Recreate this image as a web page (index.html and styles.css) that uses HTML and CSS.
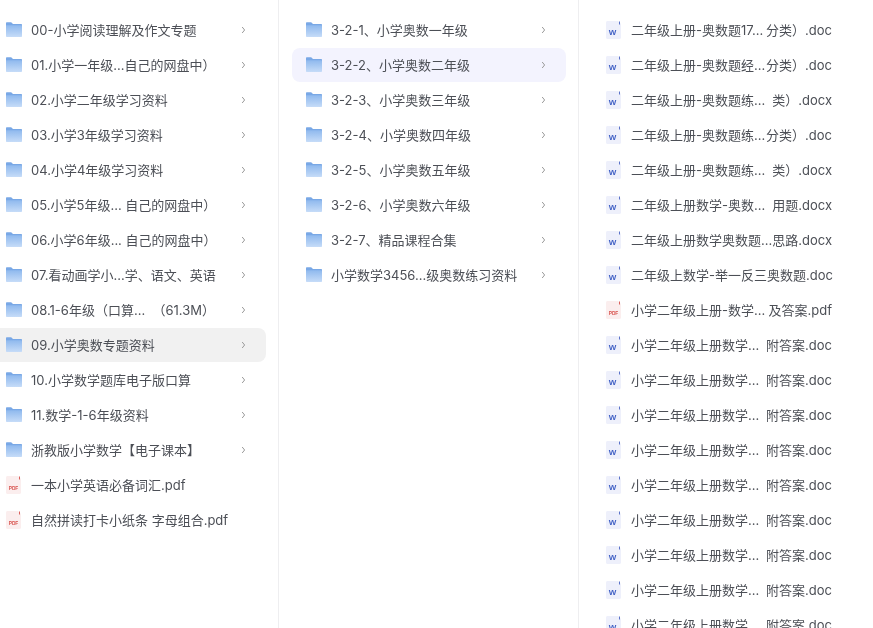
FILE: index.html
```html
<!DOCTYPE html>
<html lang="zh-CN">
<head>
<meta charset="utf-8">
<title>文件列表</title>
<link rel="stylesheet" href="styles.css">
</head>
<body>
<svg class="sprites" aria-hidden="true">
  <defs>
    <linearGradient id="fg" x1="0" y1="0" x2="0" y2="1">
      <stop offset="0" stop-color="#8fb9ee"/>
      <stop offset="1" stop-color="#c6dcf8"/>
    </linearGradient>
    <symbol id="folder" viewBox="0 0 16 16">
      <path d="M0 1.200C0 .6.400 .2 1 .2h4.200l1.800 1.800H15c.6 0 1 .4 1 1v2H0z" fill="#79a8e6"/>
      <path d="M0 3.200h15c.6 0 1 .4 1 1V14c0 .6-.4 1-1 1H1c-.6 0-1-.4-1-1z" fill="url(#fg)"/>
    </symbol>
    <symbol id="pdf" viewBox="0 0 16 18">
      <path d="M1.500 0H12l3 3v13.500c0 .8-.7 1.500-1.500 1.500h-12C.7 18 0 17.300 0 16.500v-15C0 .7.700 0 1.500 0z" fill="#fbeeee"/>
      <path d="M13.500 .5v3" stroke="#d9605c" stroke-width="1"/>
      <text x="7.500" y="13.500" class="ft pdf-t">PDF</text>
    </symbol>
    <symbol id="word" viewBox="0 0 16 18">
      <path d="M1.500 0H12l3 3v13.500c0 .8-.7 1.500-1.500 1.500h-12C.7 18 0 17.300 0 16.500v-15C0 .7.700 0 1.500 0z" fill="#eef0fb"/>
      <path d="M13.500 .5v3" stroke="#5a72c8" stroke-width="1"/>
      <text x="6.500" y="14" class="ft word-t">W</text>
    </symbol>
    <symbol id="chev" viewBox="0 0 5 8">
      <path d="M1.200 1 3.600 4 1.200 7" fill="none" stroke="#999" stroke-width="1"/>
    </symbol>
  </defs>
</svg>

<main class="columns">
  <section class="col">
    <div class="row"><svg class="ico"><use href="#folder"/></svg><span class="name">00-小学阅读理解及作文专题</span><svg class="chev"><use href="#chev"/></svg></div>
    <div class="row"><svg class="ico"><use href="#folder"/></svg><span class="name">01.小学一年级...自己的网盘中）</span><svg class="chev"><use href="#chev"/></svg></div>
    <div class="row"><svg class="ico"><use href="#folder"/></svg><span class="name">02.小学二年级学习资料</span><svg class="chev"><use href="#chev"/></svg></div>
    <div class="row"><svg class="ico"><use href="#folder"/></svg><span class="name">03.小学3年级学习资料</span><svg class="chev"><use href="#chev"/></svg></div>
    <div class="row"><svg class="ico"><use href="#folder"/></svg><span class="name">04.小学4年级学习资料</span><svg class="chev"><use href="#chev"/></svg></div>
    <div class="row"><svg class="ico"><use href="#folder"/></svg><span class="name">05.小学5年级... 自己的网盘中）</span><svg class="chev"><use href="#chev"/></svg></div>
    <div class="row"><svg class="ico"><use href="#folder"/></svg><span class="name">06.小学6年级... 自己的网盘中）</span><svg class="chev"><use href="#chev"/></svg></div>
    <div class="row"><svg class="ico"><use href="#folder"/></svg><span class="name">07.看动画学小...学、语文、英语</span><svg class="chev"><use href="#chev"/></svg></div>
    <div class="row"><svg class="ico"><use href="#folder"/></svg><span class="name">08.1-6年级（口算...  （61.3M）</span><svg class="chev"><use href="#chev"/></svg></div>
    <div class="row active-grey"><svg class="ico"><use href="#folder"/></svg><span class="name">09.小学奥数专题资料</span><svg class="chev"><use href="#chev"/></svg></div>
    <div class="row"><svg class="ico"><use href="#folder"/></svg><span class="name">10.小学数学题库电子版口算</span><svg class="chev"><use href="#chev"/></svg></div>
    <div class="row"><svg class="ico"><use href="#folder"/></svg><span class="name">11.数学-1-6年级资料</span><svg class="chev"><use href="#chev"/></svg></div>
    <div class="row"><svg class="ico"><use href="#folder"/></svg><span class="name">浙教版小学数学【电子课本】</span><svg class="chev"><use href="#chev"/></svg></div>
    <div class="row"><svg class="ico file"><use href="#pdf"/></svg><span class="name">一本小学英语必备词汇.pdf</span></div>
    <div class="row"><svg class="ico file"><use href="#pdf"/></svg><span class="name">自然拼读打卡小纸条 字母组合.pdf</span></div>
  </section>

  <section class="col">
    <div class="row"><svg class="ico"><use href="#folder"/></svg><span class="name">3-2-1、小学奥数一年级</span><svg class="chev"><use href="#chev"/></svg></div>
    <div class="row active-blue"><svg class="ico"><use href="#folder"/></svg><span class="name">3-2-2、小学奥数二年级</span><svg class="chev"><use href="#chev"/></svg></div>
    <div class="row"><svg class="ico"><use href="#folder"/></svg><span class="name">3-2-3、小学奥数三年级</span><svg class="chev"><use href="#chev"/></svg></div>
    <div class="row"><svg class="ico"><use href="#folder"/></svg><span class="name">3-2-4、小学奥数四年级</span><svg class="chev"><use href="#chev"/></svg></div>
    <div class="row"><svg class="ico"><use href="#folder"/></svg><span class="name">3-2-5、小学奥数五年级</span><svg class="chev"><use href="#chev"/></svg></div>
    <div class="row"><svg class="ico"><use href="#folder"/></svg><span class="name">3-2-6、小学奥数六年级</span><svg class="chev"><use href="#chev"/></svg></div>
    <div class="row"><svg class="ico"><use href="#folder"/></svg><span class="name">3-2-7、精品课程合集</span><svg class="chev"><use href="#chev"/></svg></div>
    <div class="row"><svg class="ico"><use href="#folder"/></svg><span class="name">小学数学3456...级奥数练习资料</span><svg class="chev"><use href="#chev"/></svg></div>
  </section>

  <section class="col last">
    <div class="row"><svg class="ico file"><use href="#word"/></svg><span class="name split"><span>二年级上册-奥数题17...</span><span>分类）.doc</span></span></div>
    <div class="row"><svg class="ico file"><use href="#word"/></svg><span class="name split"><span>二年级上册-奥数题经...</span><span>分类）.doc</span></span></div>
    <div class="row"><svg class="ico file"><use href="#word"/></svg><span class="name split"><span>二年级上册-奥数题练...</span><span>类）.docx</span></span></div>
    <div class="row"><svg class="ico file"><use href="#word"/></svg><span class="name split"><span>二年级上册-奥数题练...</span><span>分类）.doc</span></span></div>
    <div class="row"><svg class="ico file"><use href="#word"/></svg><span class="name split"><span>二年级上册-奥数题练...</span><span>类）.docx</span></span></div>
    <div class="row"><svg class="ico file"><use href="#word"/></svg><span class="name split"><span>二年级上册数学-奥数...</span><span>用题.docx</span></span></div>
    <div class="row"><svg class="ico file"><use href="#word"/></svg><span class="name split"><span>二年级上册数学奥数题...</span><span>思路.docx</span></span></div>
    <div class="row"><svg class="ico file"><use href="#word"/></svg><span class="name">二年级上数学-举一反三奥数题.doc</span></div>
    <div class="row"><svg class="ico file"><use href="#pdf"/></svg><span class="name split"><span>小学二年级上册-数学...</span><span>及答案.pdf</span></span></div>
    <div class="row"><svg class="ico file"><use href="#word"/></svg><span class="name split"><span>小学二年级上册数学...</span><span>附答案.doc</span></span></div>
    <div class="row"><svg class="ico file"><use href="#word"/></svg><span class="name split"><span>小学二年级上册数学...</span><span>附答案.doc</span></span></div>
    <div class="row"><svg class="ico file"><use href="#word"/></svg><span class="name split"><span>小学二年级上册数学...</span><span>附答案.doc</span></span></div>
    <div class="row"><svg class="ico file"><use href="#word"/></svg><span class="name split"><span>小学二年级上册数学...</span><span>附答案.doc</span></span></div>
    <div class="row"><svg class="ico file"><use href="#word"/></svg><span class="name split"><span>小学二年级上册数学...</span><span>附答案.doc</span></span></div>
    <div class="row"><svg class="ico file"><use href="#word"/></svg><span class="name split"><span>小学二年级上册数学...</span><span>附答案.doc</span></span></div>
    <div class="row"><svg class="ico file"><use href="#word"/></svg><span class="name split"><span>小学二年级上册数学...</span><span>附答案.doc</span></span></div>
    <div class="row"><svg class="ico file"><use href="#word"/></svg><span class="name split"><span>小学二年级上册数学...</span><span>附答案.doc</span></span></div>
    <div class="row"><svg class="ico file"><use href="#word"/></svg><span class="name split"><span>小学二年级上册数学...</span><span>附答案.doc</span></span></div>
  </section>
</main>
</body>
</html>
```

FILE: styles.css
```css
html, body {
  margin: 0;
  height: 100%;
  overflow: hidden;
  background: #fff;
}

body {
  font-family: Inter, "Noto Sans CJK SC", sans-serif;
  font-size: 13px;
  color: #4c4f56;
}

.sprites {
  width: 0;
  height: 0;
  overflow: hidden;
  display: block;
}

.columns {
  display: flex;
  height: 628px;
  margin-left: -21px;
  filter: blur(0.3px);
}

.col {
  flex: 0 0 300px;
  box-sizing: border-box;
  padding: 13px 12px 0 13px;
  border-right: 1px solid #eeeef0;
  display: flex;
  flex-direction: column;
  gap: 1px;
}

.col.last {
  border-right: 0;
}

.row {
  flex: 0 0 34px;
  display: flex;
  align-items: center;
  padding-left: 14px;
  border-radius: 8px;
}

.active-grey {
  background: #f1f1f1;
}

.active-blue {
  background: #f3f3fe;
}

.ico {
  flex: 0 0 16px;
  width: 16px;
  height: 16px;
  margin-right: 9px;
}

.ico.file {
  height: 18px;
}

.name {
  white-space: pre;
  line-height: 20px;
}

.split {
  width: 201px;
  display: flex;
  justify-content: space-between;
}

.chev {
  width: 5px;
  height: 8px;
  margin-left: auto;
  margin-right: 20px;
}

.ft {
  font-family: "Liberation Sans", sans-serif;
  font-weight: 700;
  text-anchor: middle;
}

.pdf-t {
  font-size: 4.8px;
  fill: #d8534e;
}

.word-t {
  font-size: 8px;
  fill: #3f5fc4;
}
```
